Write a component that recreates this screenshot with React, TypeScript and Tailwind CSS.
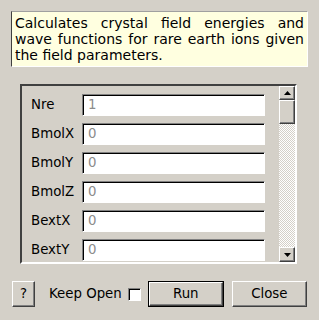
import React from 'react';

const rows = [
  {label: 'Nre', value: '1'},
  {label: 'BmolX', value: '0'},
  {label: 'BmolY', value: '0'},
  {label: 'BmolZ', value: '0'},
  {label: 'BextX', value: '0'},
  {label: 'BextY', value: '0'}
];

function Arrow({down}: {down?: boolean}) {
  return (
    <svg width="7" height="4" viewBox="0 0 7 4">
      <polygon points={down ? '0,0 7,0 3.5,4' : '0,4 7,4 3.5,0'} fill="#000" />
    </svg>
  );
}

const raised =
  'border border-t-white border-l-white border-b-[#404040] border-r-[#404040] shadow-[inset_-1px_-1px_0_#808080]';

export default function App() {
  return (
    <div
      className="w-[319px] h-[320px] bg-[#d4d0c8] text-black flex flex-col overflow-hidden"
      style={{fontFamily: '"DejaVu Sans", sans-serif'}}
    >
      {/* description */}
      <div className="mt-[11px] mx-[11px] h-[56px] bg-[#ffffe0] border border-t-[#a0a0a0] border-l-[#404040] border-b-white border-r-white px-[3px] pt-[3px] text-[14px] leading-[16px]">
        <div className="text-justify [text-align-last:justify]">Calculates crystal field energies and</div>
        <div className="text-justify [text-align-last:justify]">wave functions for rare earth ions given</div>
        <div>the field parameters.</div>
      </div>

      {/* parameter panel */}
      <div className="mt-[17px] ml-[20px] mr-[22px] h-[180px] flex border-2 border-t-[#404040] border-l-[#404040] border-b-white border-r-white">
        <div className="flex-1 flex flex-col gap-[7px] pt-[8px] pl-[9px]">
          {rows.map((r) => (
            <div key={r.label} className="flex items-center h-[22px]">
              <span className="w-[51px] text-[13.33px]">{r.label}</span>
              <div className="w-[183px] h-[22px] bg-white border border-t-[#808080] border-l-[#808080] border-b-white border-r-white shadow-[inset_1px_1px_0_#000] pl-[5px] flex items-center text-[13.33px] text-[#8c8c8c]">
                {r.value}
              </div>
            </div>
          ))}
        </div>
        <div className="w-[16px] flex flex-col">
          <div className={`h-[14px] flex items-center justify-center bg-[#d4d0c8] ${raised}`}>
            <Arrow />
          </div>
          <div className={`h-[24px] bg-[#d4d0c8] ${raised}`} />
          <div className="flex-1 bg-[repeating-conic-gradient(#d4d0c8_0_25%,#ffffff_0_50%)] bg-[length:2px_2px]" />
          <div className={`h-[15px] flex items-center justify-center bg-[#d4d0c8] ${raised}`}>
            <Arrow down />
          </div>
        </div>
      </div>

      {/* buttons */}
      <div className="mt-[17px] ml-[12px] flex items-center h-[26px] text-[13.33px]">
        <div className={`w-[23px] h-[26px] flex items-center justify-center ${raised}`}>?</div>
        <span className="ml-[14px]">Keep Open</span>
        <div className="ml-[6px] w-[13px] h-[13px] bg-white border border-t-[#808080] border-l-[#808080] border-b-white border-r-white shadow-[inset_1px_1px_0_#000]" />
        <div className="ml-[7px] w-[76px] h-[26px] border border-black">
          <div className={`w-full h-full flex items-center justify-center ${raised}`}>Run</div>
        </div>
        <div className={`ml-[8px] w-[75px] h-[26px] flex items-center justify-center ${raised}`}>Close</div>
      </div>
    </div>
  );
}
